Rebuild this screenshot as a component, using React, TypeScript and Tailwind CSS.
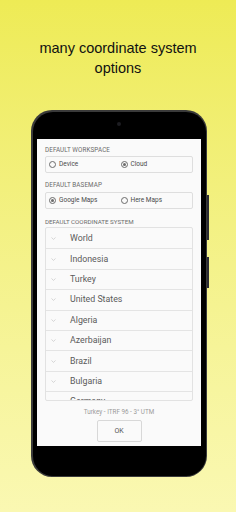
import React from "react";

const countries = [
  "World",
  "Indonesia",
  "Turkey",
  "United States",
  "Algeria",
  "Azerbaijan",
  "Brazil",
  "Bulgaria",
  "Germany",
];

function Radio({ checked, label }: { checked: boolean; label: string }) {
  return (
    <div className="flex items-center gap-[3px]">
      <div className="w-[7px] h-[7px] rounded-full border border-[#6b6b6b] flex items-center justify-center">
        {checked && <div className="w-[3px] h-[3px] rounded-full bg-[#6b6b6b]" />}
      </div>
      <span className="text-[6.5px] leading-none text-[#4a4a4a]">{label}</span>
    </div>
  );
}

function Chevron() {
  return (
    <svg width="5" height="3" viewBox="0 0 5 3" className="shrink-0">
      <path d="M0.5 0.5 L2.5 2.4 L4.5 0.5" fill="none" stroke="#c4c4c4" strokeWidth="0.7" />
    </svg>
  );
}

export default function App() {
  return (
    <div className="w-[236px] h-[512px] overflow-hidden bg-linear-to-b from-[#eeeb55] to-[#faf8b2] font-['Roboto',sans-serif]">
      <h1 className="pt-[38px] text-center text-[14.5px] leading-[20px] text-[#111] font-['Liberation_Sans',Arial,sans-serif]">
        many coordinate system
        <br />
        options
      </h1>

      <div className="relative ml-[31px] mt-[32px] w-[176px] h-[367px]">
        <div className="absolute right-[-2px] top-[85px] w-[2px] h-[45px] bg-[#2b2b33]" />
        <div className="absolute right-[-2px] top-[147px] w-[2px] h-[31px] bg-[#2b2b33]" />

        <div className="relative w-full h-full rounded-[21px] bg-[#3a3a3a] p-[1.5px]">
          <div className="w-full h-full rounded-[20px] bg-black flex flex-col px-[4.5px] pt-[27.5px] pb-[29.5px]">
            <div className="flex justify-center -mt-[17px] mb-[13px]">
              <div className="w-[4px] h-[4px] rounded-full bg-[#1d1d22]" />
            </div>

            <div className="flex-1 bg-[#fafafa] px-[8px] flex flex-col overflow-hidden">
              <div className="pt-[7px] text-[6.3px] leading-[8px] text-[#6a6a6a] tracking-[0.1px]">
                DEFAULT WORKSPACE
              </div>
              <div className="mt-[2px] h-[17px] border border-[#dedede] rounded-[2px] grid grid-cols-2 items-center pl-[3px]">
                <Radio checked={false} label="Device" />
                <Radio checked={true} label="Cloud" />
              </div>

              <div className="mt-[8px] text-[6.3px] leading-[8px] text-[#6a6a6a] tracking-[0.1px]">
                DEFAULT BASEMAP
              </div>
              <div className="mt-[3px] h-[17px] border border-[#dedede] rounded-[2px] grid grid-cols-2 items-center pl-[3px]">
                <Radio checked={true} label="Google Maps" />
                <Radio checked={false} label="Here Maps" />
              </div>

              <div className="mt-[8.5px] text-[6.2px] leading-[8px] text-[#6a6a6a]">
                DEFAULT COORDINATE SYSTEM
              </div>
              <div className="mt-[1.5px] h-[174px] border border-[#e2e2e2] rounded-[2px] overflow-hidden">
                {countries.map((c, i) => (
                  <div
                    key={c}
                    className={
                      "h-[20.4px] flex items-center pl-[5px] gap-[14px] " +
                      (i > 0 ? "border-t border-[#e4e4e4]" : "")
                    }
                  >
                    <Chevron />
                    <span className="text-[8.8px] leading-none text-[#5a5a5a]">{c}</span>
                  </div>
                ))}
              </div>

              <div className="mt-[7px] text-center text-[6.3px] leading-[8px] text-[#9a9a9a]">
                Turkey - ITRF 96 - 3° UTM
              </div>
              <div className="mt-[4px] flex justify-center">
                <div className="w-[45px] h-[22px] border border-[#d8d8d8] rounded-[2px] flex items-center justify-center text-[7px] text-[#555]">
                  OK
                </div>
              </div>
            </div>
          </div>
        </div>
      </div>
    </div>
  );
}
